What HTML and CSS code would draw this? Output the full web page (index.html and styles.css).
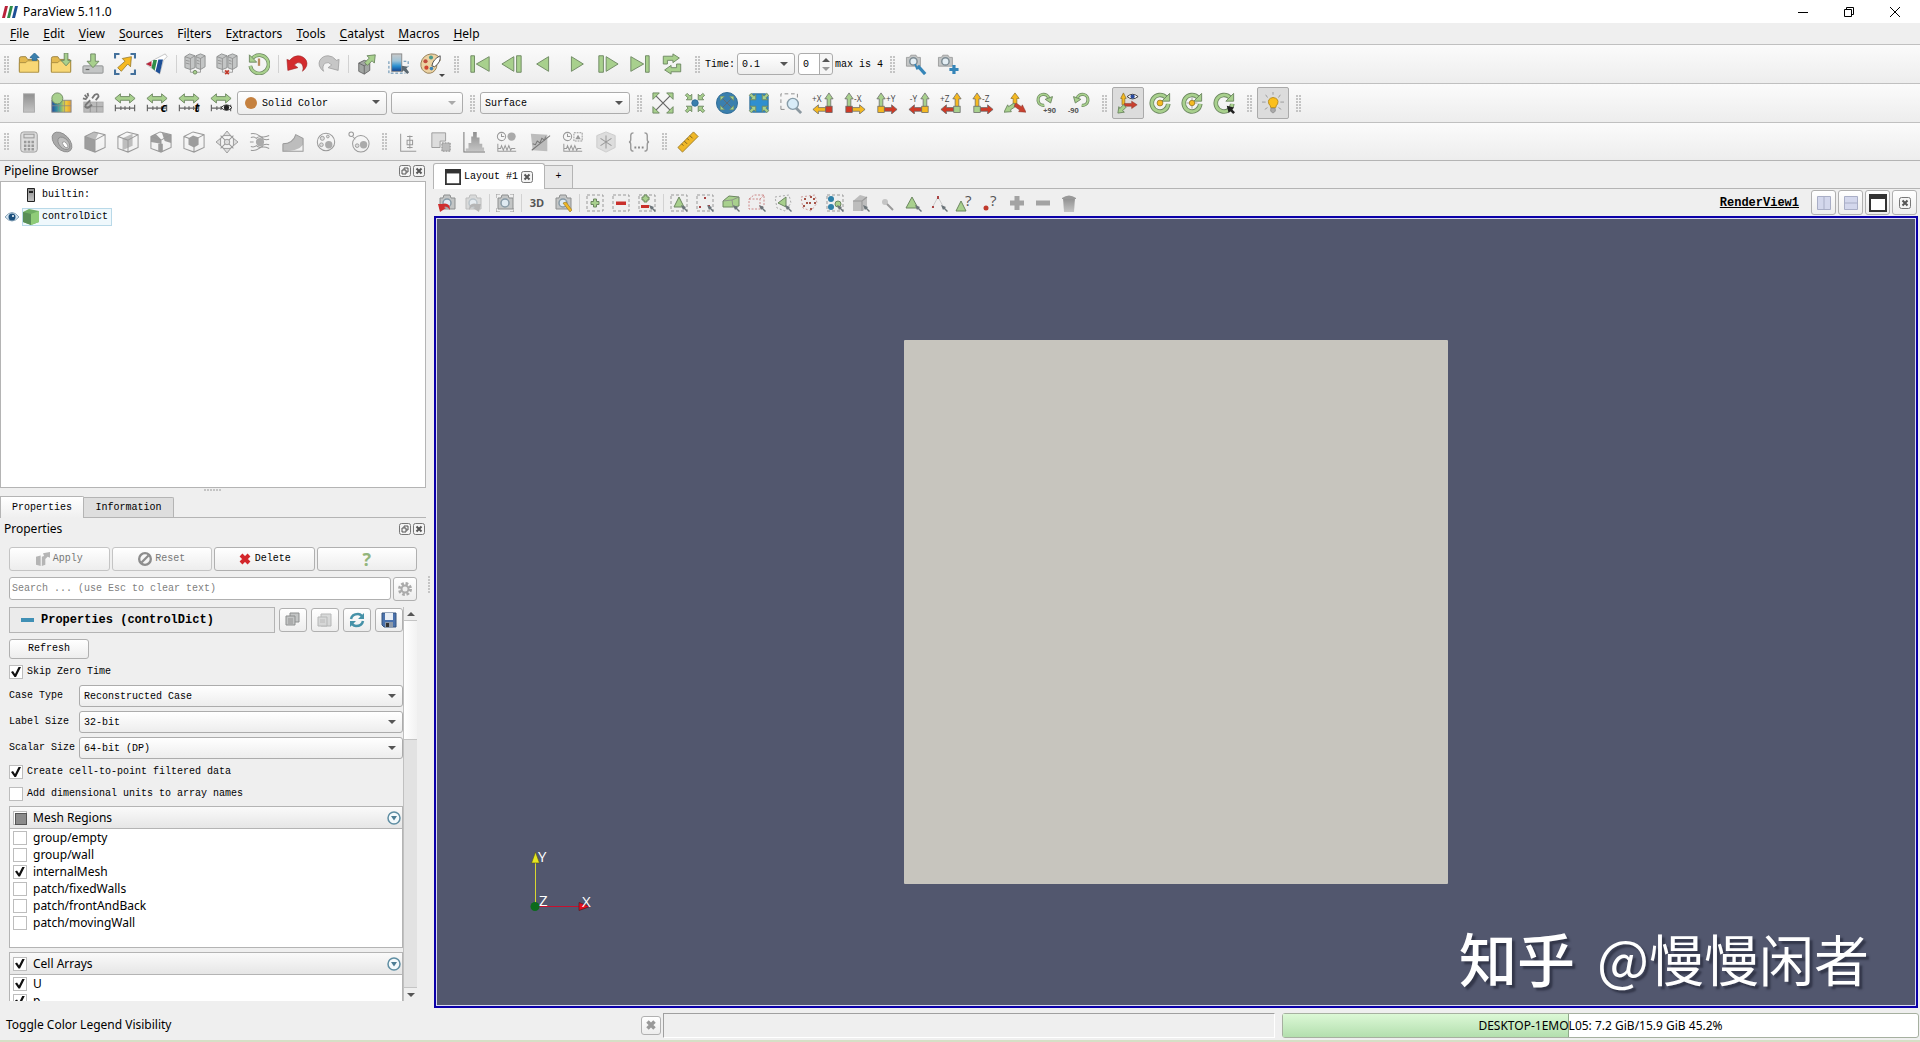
FILE: index.html
```
<!DOCTYPE html>
<html lang="en">
<head>
	<meta charset="UTF-8">
	<meta name="viewport" content="width=device-width, initial-scale=1.0">
	<title>ParaView 5.11.0</title>

	<link rel="stylesheet" href="styles.css">
</head>
<body>

	<!-- icon sprite -->
	<svg class="sprite" aria-hidden="true">
		<linearGradient id="rainbow"><stop offset="0" stop-color="#234a9c"/><stop offset=".35" stop-color="#3aa6a0"/><stop offset=".7" stop-color="#f3d23f"/><stop offset="1" stop-color="#e49a2f"/></linearGradient>
		<linearGradient id="deep" x2="0" y2="1"><stop offset="0" stop-color="#c9c9c9"/><stop offset=".4" stop-color="#9fc4d8"/><stop offset=".7" stop-color="#2a8fd0"/><stop offset="1" stop-color="#12408c"/></linearGradient>
		<linearGradient id="fade" x2="0" y2="1"><stop offset="0" stop-color="#8f8f8f"/><stop offset="1" stop-color="#c4c4c4"/></linearGradient>

		<!-- shared pieces -->
		<symbol id="folder" viewBox="0 0 24 24"><path class="folder" d="M1.500 20V6q0-2 2-2h5l2 3h10q2 0 2 2v11z"/><path class="folder-front" d="M1.500 21V10.500h7l2-2h12V21z"/></symbol>
		<symbol id="camera" viewBox="0 0 24 24"><path class="gray" d="M2 6h4l2-3h7l2 3h4v12H2z"/><circle cx="11.500" cy="11.500" r="5" fill="#e4eef4" stroke="#7e8c94" stroke-width="2"/></symbol>
		<symbol id="diag" viewBox="0 0 24 24"><path class="line" d="M4 4l16 16M20 4L4 20"/><path class="green" d="M1 1h7L1 8zM23 1v7l-7-7zM1 23v-7l7 7zM23 23h-7l7-7z"/></symbol>
		<symbol id="inward" viewBox="0 0 24 24"><path class="green" d="M8.500 2.500v6h-6l2-2-3-3 2-2 3 3zM15.500 2.500v6h6l-2-2 3-3-2-2-3 3zM8.500 21.500v-6h-6l2 2-3 3 2 2 3-3zM15.500 21.500v-6h6l-2 2 3 3-2 2-3-3z"/></symbol>
		<symbol id="range" viewBox="0 0 24 24"><path class="green" d="M1 7l6-5v3h10V2l6 5-6 5V9H7v3z"/><path class="line" d="M1 17.500h22M1.500 14v7M7.500 15.500v4M12 15.500v4M17 15.500v4M22.500 14v7"/></symbol>
		<symbol id="cube" viewBox="0 0 24 24"><path class="wire" d="M1 6l10-5 12 3v14l-11 5-11-4zM1 6l11 4v13M12 10l11-6"/></symbol>
		<symbol id="servers" viewBox="0 0 24 24"><path class="gray" d="M1 4l5-3 6 2v13l-5 2-6-2zM13 3l5-2 5 2v12l-5 3-5-2z"/><path class="line thin" d="M1 4l6 2v12M7 6l5-3M13 4l5 2v12M18 6l5-3M2 8l4 1M2 11l4 1M14 8l3 1M14 11l3 1M7 18v3h3M18 18v3h-4"/></symbol>
		<symbol id="clock" viewBox="0 0 24 24"><circle class="wire" cx="6" cy="6" r="4.500"/><path class="wire" d="M6 3v3h3"/><path class="wire" d="M2 14v8h20M2 19h3l1-3 2 5 2-5 2 5 2-5 2 5 1-2h4"/></symbol>
		<symbol id="turn" viewBox="0 0 24 24"><path d="M18.500 6A9 9 0 1 0 21 13" fill="none" stroke="#6c8760" stroke-width="5"/><path d="M18.500 6A9 9 0 1 0 21 13" fill="none" stroke="#a8d08d" stroke-width="3"/><path class="green" d="M22.500 1.500v8.500H14z"/></symbol>

		<!-- main controls -->
		<symbol id="open" viewBox="0 0 24 24"><use href="#folder"/><path class="blue" d="M18 0l5 5h-2.500v3h-5V5H13z"/></symbol>
		<symbol id="recent" viewBox="0 0 24 24"><use href="#folder"/><path class="green" d="M15.500 0h4v8h3.500l-5.500 6-5.500-6h3.500z"/></symbol>
		<symbol id="save" viewBox="0 0 24 24"><rect class="gray" x="1" y="14" width="22" height="8" rx="1"/><path class="line" d="M4 18h4"/><path class="green" d="M9.500 1h5v8h4L12 16 5.500 9h4z"/></symbol>
		<symbol id="extract" viewBox="0 0 24 24"><path d="M1 6V1h5M18 1h5v5M23 18v5h-5M6 23H1v-5" fill="none" stroke="#44719c" stroke-width="2.500"/><path class="yellow" d="M19 4l-1 11-3-3-7 8-4-4 8-7-3-3z"/></symbol>
		<symbol id="flask" viewBox="0 0 24 24"><path d="M17 3l4-2 2 3-4 4-4 15L0 12z" fill="#fff" stroke="#aaa" stroke-width=".7"/><path d="M0 12l6-3 0 6z" fill="#b8233a"/><path d="M8 7.500h4L9.500 19 6 16z" fill="#2e8d49"/><path d="M13.500 7h5L15 22.500 10.500 20z" fill="#1d4f96"/></symbol>
		<symbol id="connect" viewBox="0 0 24 24"><use href="#servers"/><circle class="green" cx="12" cy="21" r="2"/></symbol>
		<symbol id="disconnect" viewBox="0 0 24 24"><use href="#servers"/><path d="M10 19l4 4M14 19l-4 4" stroke="#c0392b" stroke-width="2"/></symbol>
		<symbol id="history" viewBox="0 0 24 24"><path d="M5 5.500A10 10 0 1 1 2.500 14" fill="none" stroke="#6c8760" stroke-width="4"/><path d="M5 5.500A10 10 0 1 1 2.500 14" fill="none" stroke="#a8d08d" stroke-width="2.500"/><path class="green" d="M1.500 2v8h8z"/><path d="M12 6v8" stroke="#b98c60" stroke-width="2.500"/></symbol>
		<symbol id="undo" viewBox="0 0 24 24"><path d="M1 7l1 12 11-3-4-3q4-4 7-2 4 3 2 9 7-6 4-12-3-5-9-5-5 0-9 5z" fill="#d32b2e" stroke="#9b2225" stroke-width=".6"/></symbol>
		<symbol id="redo" viewBox="0 0 24 24"><path d="M23 7l-1 12-11-3 4-3q-4-4-7-2-4 3-2 9-7-6-4-12 3-5 9-5 5 0 9 5z" fill="#c6c6c6" stroke="#999" stroke-width=".8"/></symbol>
		<symbol id="reload" viewBox="0 0 24 24"><path class="gray dark" d="M3 11l6-3 6 2v9l-6 4-6-3zM3 11l6 3v9M9 14l6-4"/><path class="green" d="M21 2l-1 9-2.500-2.500-5 5-3-3 5-5L12 3z"/></symbol>
		<symbol id="colorbar" viewBox="0 0 24 24"><rect x="4" y="1" width="11" height="19" fill="url(#deep)" stroke="#888"/><path d="M1 9v13h18M17 9h5v6" fill="none" stroke="#4a7fa5" stroke-dasharray="3 2"/><path d="M15 14l7 1-2 2 3 4-2 2-4-4-2 2z" fill="#5b6770"/></symbol>
		<symbol id="palette" viewBox="0 0 24 24"><path d="M12 1q9 0 10 7-5 4-4 8-3 7-10 6Q0 19 1 11 3 2 12 1z" fill="#ecd2a2" stroke="#8e7850"/><circle cx="6" cy="9" r="2.300" fill="#bf4d3d"/><circle cx="12" cy="5" r="2.200" fill="#4c9a8c"/><circle cx="7" cy="16" r="2.300" fill="#cf4431"/><circle cx="12.500" cy="17" r="2" fill="#3e86b8"/><path d="M22 3q-8 4-9 11l3 1q7-5 6-12z" fill="#fff" stroke="#444"/></symbol>

		<!-- playback -->
		<symbol id="first" viewBox="0 0 24 24"><path class="green" d="M2 3h4v18H2zM22 4v16L8 12z"/></symbol>
		<symbol id="previous" viewBox="0 0 24 24"><path class="green" d="M17 3h5v18h-5zM14 4v16L1 12z"/></symbol>
		<symbol id="reverse" viewBox="0 0 24 24"><path class="green" d="M17 4v16L4 12z"/></symbol>
		<symbol id="last" viewBox="0 0 24 24"><path class="green" d="M18 3h4v18h-4zM2 4v16l14-8z"/></symbol>
		<symbol id="loop" viewBox="0 0 24 24"><path class="green" d="M2.500 12V3.500H13V1l7 4.500-7 5V8H7v4zM21.500 12v8.500H11V23l-7-4.500 7-5V16h6v-4z"/></symbol>
		<symbol id="camera-edit" viewBox="0 0 24 24"><g transform="scale(.8)"><use href="#camera" width="24" height="24"/></g><path d="M14 14l8 9" stroke="#3585b8" stroke-width="3.500"/><path d="M11 12l2 5 4-1" fill="none" stroke="#3585b8" stroke-width="2"/></symbol>
		<symbol id="camera-add" viewBox="0 0 24 24"><g transform="scale(.8)"><use href="#camera" width="24" height="24"/></g><path d="M18.500 13v10M13.500 18h10" stroke="#3585b8" stroke-width="3.500"/></symbol>

		<!-- color map -->
		<symbol id="legend" viewBox="0 0 24 24"><rect x="6" y="2" width="12" height="20" fill="url(#fade)" stroke="#aaa"/></symbol>
		<symbol id="colormap" viewBox="0 0 24 24"><rect x="2" y="9" width="21" height="13" fill="url(#rainbow)" stroke="#888"/><path class="line thin" d="M2 15h21M9 9v13M16 9v13"/><circle class="green" cx="8" cy="7" r="6"/></symbol>
		<symbol id="unlink" viewBox="0 0 24 24"><rect x="2" y="11" width="21" height="11" fill="#bbb" stroke="#aaa"/><path class="line thin" d="M2 16h21M9 11v11M16 11v11"/><path d="M11 7l3-4q4-2 4 2l-3 4M9 9l-5 5q-1 4 3 3l4-3M3 3l3 4M1 7l4 1M6 1l1 4" fill="none" stroke="#777" stroke-width="2"/></symbol>
		<symbol id="range-eye" viewBox="0 0 24 24"><use href="#range"/><path d="M12 17q6-6 12 0-6 6-12 0z" fill="#eee" stroke="#222"/><circle cx="18" cy="17" r="2.800" fill="#222"/></symbol>

		<!-- camera controls -->
		<symbol id="zoom-all" viewBox="0 0 24 24"><use href="#inward"/><circle class="blue" cx="12" cy="12" r="3.500"/></symbol>
		<symbol id="globe" viewBox="0 0 24 24"><circle class="blue" cx="12" cy="12" r="11.500"/><g transform="translate(4 4) scale(.67)"><use href="#diag" width="24" height="24"/></g></symbol>
		<symbol id="zoom-box" viewBox="0 0 24 24"><rect class="blue bright" x="2" y="2" width="20" height="20" rx="3"/><use href="#inward"/></symbol>
		<symbol id="rubber" viewBox="0 0 24 24"><path d="M1 19V2h18v5M1 19h6" fill="none" stroke="#888" stroke-dasharray="4 3"/><path d="M17 17l6 6" stroke="#8b98a0" stroke-width="3"/><circle cx="14" cy="13" r="6" fill="#d8ecf8" stroke="#879ca8" stroke-width="1.500"/></symbol>
		<symbol id="axis-left" viewBox="0 0 24 24"><path class="u" d="M16.500 16V7.500H14L18.500 1 23 7.500h-2.500V16z"/><path class="s" d="M15 17H7v-3l-6 5 6 5v-3h8z"/><rect class="o" x="15" y="15.500" width="7" height="7"/></symbol>
		<symbol id="axis-right" viewBox="0 0 24 24"><path class="u" d="M3.500 16V7.500H1L5.500 1 10 7.500H7.500V16z"/><path class="s" d="M9 17h8v-3l6 5-6 5v-3H9z"/><rect class="o" x="2" y="15.500" width="7" height="7"/></symbol>
		<symbol id="iso" viewBox="0 0 24 24"><path class="yellow" d="M10 14V7H7.500L12 1l4.500 6H14v7z"/><path class="green" d="M11 12l-6 4-1-2-4 8 8-.5-1-2 6-4z"/><path class="red" d="M13 12l6 4 1-2 4 8-8-.5 1-2-6-4z"/></symbol>
		<symbol id="rot-plus" viewBox="0 0 24 24"><path d="M9 14.500A6 6 0 1 1 14 7" fill="none" stroke="#6c8760" stroke-width="3.500"/><path d="M9 14.500A6 6 0 1 1 14 7" fill="none" stroke="#a8d08d" stroke-width="2"/><path class="green" d="M18 5l-2 7-6-4z"/></symbol>
		<symbol id="rot-minus" viewBox="0 0 24 24"><path d="M15 14.500A6 6 0 1 0 10 7" fill="none" stroke="#6c8760" stroke-width="3.500"/><path d="M15 14.500A6 6 0 1 0 10 7" fill="none" stroke="#a8d08d" stroke-width="2"/><path class="green" d="M6 5l2 7 6-4z"/></symbol>
		<symbol id="axes-show" viewBox="0 0 24 24"><path class="yellow" d="M5.500 14V7H4l3-6 3 6H8.500v7z"/><path class="red" d="M8 12.500h8V10l6 4-6 4v-2.500H8z"/><path class="green" d="M7 14l-4 4-1-2-1 7 7-1-2-1.500 4-4z"/><path d="M11 5q6-5 12 0-6 5-12 0z" fill="#fff" stroke="#333"/><circle cx="17" cy="5" r="2.300" fill="#2b4c9e"/></symbol>
		<symbol id="center-show" viewBox="0 0 24 24"><use href="#turn"/><circle class="yellow" cx="12" cy="12" r="3.200"/></symbol>
		<symbol id="center-reset" viewBox="0 0 24 24"><use href="#turn"/><path class="line thin" d="M12 6v12M6 12h12"/><circle class="yellow" cx="12" cy="12" r="3"/></symbol>
		<symbol id="center-pick" viewBox="0 0 24 24"><use href="#turn"/><path d="M15 15l8 2-2 2 3 3-2 2-3-3-2 2z" fill="#222"/></symbol>
		<symbol id="bulb" viewBox="0 0 24 24"><path class="line thin" d="M12 0v3M4 3l2 3M20 3l-2 3M0 11h4M20 11h4M3 19l3-2M21 19l-3-2"/><path d="M9.500 17q0-2-2-4-2-6 4.500-7 7 1 5 7-2 2-2 4z" fill="#fbbf1b" stroke="#b58a1b"/><path d="M9.500 18h5v3l-2.500 2-2.500-2z" fill="#aaa" stroke="#777" stroke-width=".6"/></symbol>

		<!-- common filters -->
		<symbol id="calculator" viewBox="0 0 24 24"><rect class="pale" x="3" y="1" width="18" height="22" rx="3"/><rect class="wire" x="6.500" y="3.500" width="11" height="4"/><path d="M6.500 12h11M6.500 16h11M6.500 20h11" stroke="#999" stroke-width="2.700" stroke-dasharray="2.700 1.400"/></symbol>
		<symbol id="contour" viewBox="0 0 24 24"><ellipse cx="12" cy="12" rx="13" ry="8" transform="rotate(45 12 12)" fill="#a9a9a9" stroke="#8d8d8d"/><ellipse cx="14" cy="13.500" rx="8" ry="5" transform="rotate(48 14 13.500)" fill="#c0c0c0" stroke="#8d8d8d"/><ellipse cx="15.500" cy="15" rx="4" ry="2" transform="rotate(50 15.500 15)" fill="#fff" stroke="#999"/></symbol>
		<symbol id="clip" viewBox="0 0 24 24"><path class="solid" d="M1 6l11 4v13L1 19z"/><path class="solid light" d="M1 6l10-5 5 1-4 8z"/><use href="#cube"/></symbol>
		<symbol id="slice" viewBox="0 0 24 24"><path class="solid light" d="M6 8l11-5v13L6 21z"/><use href="#cube"/></symbol>
		<symbol id="threshold" viewBox="0 0 24 24"><path class="solid" d="M1 6l5-3 6 6v5L1 12zM13 2l10 2v9l-7-2zM9 14h5v8H9z"/><use href="#cube"/></symbol>
		<symbol id="subset" viewBox="0 0 24 24"><use href="#cube"/><path class="solid" d="M6 8l5-3 6 2v8l-5 3-6-3z"/></symbol>
		<symbol id="glyph" viewBox="0 0 24 24"><circle class="wire" cx="12" cy="12" r="8"/><path class="wire" d="M5 5l14 14M19 5L5 19"/><path class="pale" d="M12 0l4 5H8zM12 24l4-5H8zM0 12l5-4v8zM24 12l-5-4v8z"/><circle class="pale" cx="12" cy="12" r="3"/></symbol>
		<symbol id="stream" viewBox="0 0 24 24"><circle cx="12" cy="12" r="4.500" fill="#aaa"/><path class="wire" d="M2 3q5-1 9 2t11 0M2 7q4-1 6 1 4-4 8 1 3 1 6 0M2 17q4 1 6-1 4 4 8-1 3-1 6 0M2 21q5 1 9-2t11 0M1 12h4"/></symbol>
		<symbol id="warp" viewBox="0 0 24 24"><path class="solid light" d="M1 14q11 0 14-10l8 4v7q-5 7-22 7z"/><path class="wire" d="M1 14v8h22V8M1 14q11 0 14-10l8 4"/></symbol>
		<symbol id="group" viewBox="0 0 24 24"><circle class="wire" cx="12" cy="12" r="9.500"/><circle cx="15" cy="15" r="4" fill="#aaa"/><circle class="pale" cx="8" cy="8" r="2.200"/><circle class="pale" cx="7" cy="15" r="2"/><circle class="pale" cx="14" cy="6" r="1.500"/></symbol>
		<symbol id="level" viewBox="0 0 24 24"><circle class="wire" cx="14" cy="14" r="9"/><circle class="wire" cx="3.500" cy="3.500" r="2.500"/><path class="wire" d="M5 6l3 3"/><circle cx="17" cy="15" r="4" fill="#aaa"/><circle class="pale" cx="10" cy="16" r="2"/></symbol>
		<symbol id="plot-box" viewBox="0 0 24 24"><path class="wire" d="M4 3v19h17M14 5v14M11 6h6M11 18h6M11 10h6v5h-6z"/></symbol>
		<symbol id="extract-sel" viewBox="0 0 24 24"><path class="pale" d="M2 2h15v9h-6v7H2z"/><path d="M13 13h9v9h-9z" fill="#bbb" stroke="#888" stroke-dasharray="2 1"/></symbol>
		<symbol id="histogram" viewBox="0 0 24 24"><path d="M3 22v-3h3v-6h3V6h2V1h4v6h3v7h3v4h2v4z" fill="url(#fade)"/><path class="wire dark" d="M1 1v22h23"/></symbol>
		<symbol id="plot-time" viewBox="0 0 24 24"><use href="#clock"/><circle cx="17" cy="6" r="4.500" fill="#aaa"/></symbol>
		<symbol id="plot-line" viewBox="0 0 24 24"><path class="solid light" d="M2 3l18 1v18l-16-1z"/><path class="wire dark" d="M3 21L23 5M4 14l3 1 2-4 3 2 2-5 3 2 1-4"/></symbol>
		<symbol id="plot-sel" viewBox="0 0 24 24"><use href="#clock"/><path class="wire" d="M13 2h9v9h-9z" stroke-dasharray="2 1"/><path d="M17.500 4l3 5h-6z" fill="#999"/></symbol>
		<symbol id="snow" viewBox="0 0 24 24"><path d="M12 1l10 4v13l-10 5-10-5V5z" fill="#ddd" stroke="#ccc"/><path class="wire" d="M12 5v14M6 8l12 8M18 8L6 16"/></symbol>
		<symbol id="braces" viewBox="0 0 24 24"><path d="M6 2Q3 2 3 5v4q0 3-2 3 2 0 2 3v4q0 3 3 3M18 2q3 0 3 3v4q0 3 2 3-2 0-2 3v4q0 3-3 3" fill="none" stroke="#999" stroke-width="1.500"/><path d="M7 18h10" stroke="#888" stroke-width="2" stroke-dasharray="2"/></symbol>
		<symbol id="ruler" viewBox="0 0 24 24"><path d="M1 18L18 1l5 5L6 23z" fill="#f0b726" stroke="#9c7b23"/><path d="M5 14l2 2M8 11l3 3M11 8l2 2M14 5l3 3" stroke="#6f5b20"/></symbol>

		<!-- view toolbar, 18px grid -->
		<symbol id="s-box" viewBox="0 0 18 18"><path d="M1 1h16v16H1z" fill="none" stroke="#999" stroke-dasharray="3 2"/></symbol>
		<symbol id="s-hand" viewBox="0 0 18 18"><path d="M11 11l5 2-1 1 3 3-1 1-3-3-1 1z" fill="#6b7479"/></symbol>
		<symbol id="s-camera" viewBox="0 0 18 18"><path class="gray" d="M2 4h3l1-3h6l1 3h4v11H2z"/><circle cx="9" cy="9" r="4" fill="#dfeaf2" stroke="#889aa6" stroke-width="1.500"/></symbol>
		<symbol id="s-undo" viewBox="0 0 18 18"><use href="#s-camera"/><path d="M0 10l2 8 6-4-2-1q3-2 6 3 0-8-8-6z" fill="#cf2e2e"/></symbol>
		<symbol id="s-redo" viewBox="0 0 18 18"><use href="#s-camera" opacity=".5"/><path d="M17 10l-2 8-6-4 2-1q-3-2-6 3 0-8 8-6z" fill="#b5b5b5"/></symbol>
		<symbol id="s-shot" viewBox="0 0 18 18"><use href="#s-camera"/><path class="wire" d="M0 4V0h4M14 0h4v4M18 14v4h-4M4 18H0v-4"/></symbol>
		<symbol id="s-pencil" viewBox="0 0 18 18"><use href="#s-camera"/><path d="M9 9l3-1 6 8-2 2z" fill="#f0b726" stroke="#8d7024" stroke-width=".6"/></symbol>
		<symbol id="s-add" viewBox="0 0 18 18"><use href="#s-box"/><path class="green" d="M7.500 5h3v2.500H13v3h-2.500V13h-3v-2.500H5v-3h2.500z"/></symbol>
		<symbol id="s-sub" viewBox="0 0 18 18"><use href="#s-box"/><path d="M4 7.500h10v3.500H4z" fill="#c9302c"/></symbol>
		<symbol id="s-toggle" viewBox="0 0 18 18"><use href="#s-box"/><path class="green" d="M6 1h3v2h2v3H9v2H6V6H4V3h2z"/><path d="M3 11h8v3H3z" fill="#c9302c"/><use href="#s-hand"/></symbol>
		<symbol id="s-cells" viewBox="0 0 18 18"><use href="#s-box"/><path class="green" d="M9 3l5 10H4z"/><use href="#s-hand"/></symbol>
		<symbol id="s-points" viewBox="0 0 18 18"><use href="#s-box"/><path d="M8 3h2v2H8zM3 12h2v2H3zM12 11h2v2h-2z" fill="#a44"/><use href="#s-hand"/></symbol>
		<symbol id="s-frustum" viewBox="0 0 18 18"><path class="green" d="M1 7l6-5 10 1v9l-6 1H1z"/><path class="line thin" d="M1 7l9-1 7-3M10 6l1 7"/><use href="#s-hand"/></symbol>
		<symbol id="s-fpoints" viewBox="0 0 18 18"><path d="M1 5l5-4h10v10l-4 4H1zM1 5h11v10M12 5l4-4" fill="none" stroke="#c88" stroke-dasharray="2 1.500"/><use href="#s-hand"/></symbol>
		<symbol id="s-poly" viewBox="0 0 18 18"><path d="M1 3l14-2 2 8-6 8-8-3z" fill="none" stroke="#aaa" stroke-dasharray="2 2"/><path class="green" d="M12 3v10L4 9z"/><use href="#s-hand"/></symbol>
		<symbol id="s-polyp" viewBox="0 0 18 18"><path d="M1 3l14-2 2 8-6 8-8-3z" fill="none" stroke="#c99" stroke-dasharray="2 2"/><path d="M4 4h2v2H4zM10 2h2v2h-2zM3 11h2v2H3zM9 8h2v2H9zM14 8h2v2h-2zM10 14h2v2h-2zM13 4h2v2h-2zM6 8h2v2H6z" fill="#a65448"/></symbol>
		<symbol id="s-block" viewBox="0 0 18 18"><use href="#s-box"/><circle cx="5" cy="5" r="3" fill="#2f81a8"/><circle cx="5" cy="13" r="3" fill="#2f81a8"/><circle class="green" cx="12" cy="10" r="3"/><use href="#s-hand"/></symbol>
		<symbol id="s-blocks" viewBox="0 0 18 18"><path class="solid light" d="M1 7l7-6 7 2v9l-4 5H1z"/><path class="wire" d="M1 7h9l5-4M10 7v10"/><use href="#s-hand"/></symbol>
		<symbol id="s-dot" viewBox="0 0 18 18"><circle cx="7" cy="8" r="3" fill="#c4c4c4"/><path d="M9 10l6 6" stroke="#999" stroke-width="2"/></symbol>
		<symbol id="s-cell" viewBox="0 0 18 18"><path class="green" d="M8 3l6 11H2z"/><use href="#s-hand"/></symbol>
		<symbol id="s-point" viewBox="0 0 18 18"><path d="M8 3l6 11M8 3L2 14" stroke="#ccc"/><path d="M7 2h2v3H7zM2 12h2v2H2z" fill="#a44"/><use href="#s-hand"/></symbol>
		<symbol id="s-plus" viewBox="0 0 18 18"><path d="M9 2v14M2 9h14" stroke="#a3a3a3" stroke-width="5"/></symbol>
		<symbol id="s-minus" viewBox="0 0 18 18"><path d="M2 9h14" stroke="#a3a3a3" stroke-width="5"/></symbol>
		<symbol id="s-trash" viewBox="0 0 18 18"><path d="M3 4h12l-1 14H4z" fill="url(#fade)"/><path d="M2 4q7-5 14 0v1H2z" fill="#999"/></symbol>

		<!-- dock and panel -->
		<symbol id="float" viewBox="0 0 12 12"><rect class="frame" x=".5" y=".5" width="11" height="11" rx="2"/><path d="M5 5V3h4v4H7M3 5h4v4H3z" fill="none" stroke="#555"/></symbol>
		<symbol id="close" viewBox="0 0 12 12"><rect class="frame" x=".5" y=".5" width="11" height="11" rx="2"/><path d="M3.500 3.500l5 5M8.500 3.500l-5 5" stroke="#555" stroke-width="2"/></symbol>
		<symbol id="pane" viewBox="0 0 18 18"><path d="M1 1h16v16H1z" fill="#fff" stroke="#333" stroke-width="2"/><path d="M0 0h18v5H0z" fill="#333"/></symbol>
		<symbol id="drop" viewBox="0 0 14 14"><circle cx="7" cy="7" r="6" fill="#f4fafc" stroke="#5f8ea3" stroke-width="1.500"/><path d="M4 5h6L7 9.500z" fill="#4d7d94"/></symbol>
	</svg>

	<header class="titlebar">
		<svg class="logo" viewBox="0 0 16 12"><path d="M3 0h3L3 12H0z" fill="#b8233a"/><path d="M8 0h3L8 12H5z" fill="#2e8d49"/><path d="M13 0h3l-3 12h-3z" fill="#1d4f96"/></svg>
		<span class="title">ParaView 5.11.0</span>
		<button class="win" aria-label="Minimize"><svg viewBox="0 0 12 12"><path d="M1 6.500h10"/></svg></button>
		<button class="win" aria-label="Restore"><svg viewBox="0 0 12 12"><path d="M1.500 3.500h7v7h-7zM3.500 3.500v-2h7v7h-2"/></svg></button>
		<button class="win" aria-label="Close"><svg viewBox="0 0 12 12"><path d="M1 1l10 10M11 1L1 11"/></svg></button>
	</header>

	<nav class="menubar">
		<a href="#"><u>F</u>ile</a>
		<a href="#"><u>E</u>dit</a>
		<a href="#"><u>V</u>iew</a>
		<a href="#"><u>S</u>ources</a>
		<a href="#">Fi<u>l</u>ters</a>
		<a href="#">E<u>x</u>tractors</a>
		<a href="#"><u>T</u>ools</a>
		<a href="#"><u>C</u>atalyst</a>
		<a href="#"><u>M</u>acros</a>
		<a href="#"><u>H</u>elp</a>
	</nav>

	<div class="toolbar">
		<i class="grip"></i>
		<button class="tool" aria-label="Open"><svg><use href="#open"/></svg></button>
		<button class="tool" aria-label="Recent"><svg><use href="#recent"/></svg></button>
		<button class="tool" aria-label="Save data"><svg><use href="#save"/></svg></button>
		<button class="tool" aria-label="Save extracts"><svg><use href="#extract"/></svg></button>
		<button class="tool" aria-label="Save state"><svg><use href="#flask"/></svg></button>
		<i class="sep"></i>
		<button class="tool" aria-label="Connect"><svg><use href="#connect"/></svg></button>
		<button class="tool" aria-label="Disconnect"><svg><use href="#disconnect"/></svg></button>
		<button class="tool" aria-label="Reset session"><svg><use href="#history"/></svg></button>
		<i class="sep"></i>
		<button class="tool" aria-label="Undo"><svg><use href="#undo"/></svg></button>
		<button class="tool" aria-label="Redo"><svg><use href="#redo"/></svg></button>
		<i class="sep"></i>
		<button class="tool" aria-label="Auto apply"><svg><use href="#reload"/></svg></button>
		<button class="tool" aria-label="Find data"><svg><use href="#colorbar"/></svg></button>
		<button class="tool has-menu" aria-label="Color palette"><svg><use href="#palette"/></svg></button>
		<i class="grip"></i>
		<button class="tool" aria-label="First frame"><svg><use href="#first"/></svg></button>
		<button class="tool" aria-label="Previous frame"><svg><use href="#previous"/></svg></button>
		<button class="tool" aria-label="Reverse"><svg><use href="#reverse"/></svg></button>
		<button class="tool flip" aria-label="Play"><svg><use href="#reverse"/></svg></button>
		<button class="tool flip" aria-label="Next frame"><svg><use href="#previous"/></svg></button>
		<button class="tool" aria-label="Last frame"><svg><use href="#last"/></svg></button>
		<button class="tool" aria-label="Loop"><svg><use href="#loop"/></svg></button>
		<i class="grip"></i>
		<label for="time">Time:</label>
		<span class="combo combo-time"><select id="time"><option>0.1</option></select></span>
		<span class="spin"><input id="step" type="number" value="0" aria-label="Time step"></span>
		<label for="step">max is 4</label>
		<i class="grip"></i>
		<button class="tool" aria-label="Adjust camera"><svg><use href="#camera-edit"/></svg></button>
		<button class="tool" aria-label="Add camera"><svg><use href="#camera-add"/></svg></button>
	</div>

	<div class="toolbar">
		<i class="grip"></i>
		<button class="tool" aria-label="Legend"><svg><use href="#legend"/></svg></button>
		<button class="tool" aria-label="Edit color map"><svg><use href="#colormap"/></svg></button>
		<button class="tool" aria-label="Separate color map"><svg><use href="#unlink"/></svg></button>
		<button class="tool" aria-label="Rescale to data"><svg><use href="#range"/></svg></button>
		<button class="tool" aria-label="Rescale to custom"><svg viewBox="0 0 24 24"><use href="#range"/><text x="16" y="22" class="mark">c</text></svg></button>
		<button class="tool" aria-label="Rescale over time"><svg viewBox="0 0 24 24"><use href="#range"/><text x="18" y="22" class="mark">t</text></svg></button>
		<button class="tool" aria-label="Rescale to visible"><svg><use href="#range-eye"/></svg></button>
		<span class="combo combo-color"><select aria-label="Coloring"><option>Solid Color</option></select></span>
		<span class="combo combo-part"><select aria-label="Component" disabled></select></span>
		<i class="grip"></i>
		<span class="combo combo-rep"><select aria-label="Representation"><option>Surface</option></select></span>
		<i class="grip"></i>
		<button class="tool" aria-label="Reset camera"><svg><use href="#diag"/></svg></button>
		<button class="tool" aria-label="Zoom to data"><svg><use href="#zoom-all"/></svg></button>
		<button class="tool" aria-label="Reset camera closest"><svg><use href="#globe"/></svg></button>
		<button class="tool" aria-label="Zoom closest"><svg><use href="#zoom-box"/></svg></button>
		<button class="tool" aria-label="Zoom to box"><svg><use href="#rubber"/></svg></button>
		<button class="tool ax-x" aria-label="+X"><svg viewBox="0 0 24 24"><use href="#axis-left"/><text x="0" y="11">+X</text></svg></button>
		<button class="tool ax-x" aria-label="-X"><svg viewBox="0 0 24 24"><use href="#axis-right"/><text x="11" y="11">-X</text></svg></button>
		<button class="tool ax-y" aria-label="+Y"><svg viewBox="0 0 24 24"><use href="#axis-right"/><text x="11" y="11">+Y</text></svg></button>
		<button class="tool ax-y" aria-label="-Y"><svg viewBox="0 0 24 24"><use href="#axis-left"/><text x="2" y="11">-Y</text></svg></button>
		<button class="tool ax-z" aria-label="+Z"><svg viewBox="0 0 24 24"><use href="#axis-left"/><text x="0" y="11">+Z</text></svg></button>
		<button class="tool ax-z" aria-label="-Z"><svg viewBox="0 0 24 24"><use href="#axis-right"/><text x="11" y="11">-Z</text></svg></button>
		<button class="tool" aria-label="Isometric"><svg><use href="#iso"/></svg></button>
		<button class="tool" aria-label="Rotate +90"><svg viewBox="0 0 24 24"><use href="#rot-plus"/><text x="8" y="23" class="deg">+90</text></svg></button>
		<button class="tool" aria-label="Rotate -90"><svg viewBox="0 0 24 24"><use href="#rot-minus"/><text x="0" y="23" class="deg">-90</text></svg></button>
		<i class="grip"></i>
		<button class="tool pressed" aria-label="Show orientation axes"><svg><use href="#axes-show"/></svg></button>
		<button class="tool" aria-label="Show center"><svg><use href="#center-show"/></svg></button>
		<button class="tool" aria-label="Reset center"><svg><use href="#center-reset"/></svg></button>
		<button class="tool" aria-label="Pick center"><svg><use href="#center-pick"/></svg></button>
		<i class="grip"></i>
		<button class="tool pressed" aria-label="Light kit"><svg><use href="#bulb"/></svg></button>
		<i class="grip"></i>
	</div>

	<div class="toolbar filters">
		<i class="grip"></i>
		<button class="tool" aria-label="Calculator"><svg><use href="#calculator"/></svg></button>
		<button class="tool" aria-label="Contour"><svg><use href="#contour"/></svg></button>
		<button class="tool" aria-label="Clip"><svg><use href="#clip"/></svg></button>
		<button class="tool" aria-label="Slice"><svg><use href="#slice"/></svg></button>
		<button class="tool" aria-label="Threshold"><svg><use href="#threshold"/></svg></button>
		<button class="tool" aria-label="Extract subset"><svg><use href="#subset"/></svg></button>
		<button class="tool" aria-label="Glyph"><svg><use href="#glyph"/></svg></button>
		<button class="tool" aria-label="Stream tracer"><svg><use href="#stream"/></svg></button>
		<button class="tool" aria-label="Warp by vector"><svg><use href="#warp"/></svg></button>
		<button class="tool" aria-label="Group datasets"><svg><use href="#group"/></svg></button>
		<button class="tool" aria-label="Extract level"><svg><use href="#level"/></svg></button>
		<i class="grip"></i>
		<button class="tool" aria-label="Quartiles"><svg><use href="#plot-box"/></svg></button>
		<button class="tool" aria-label="Extract selection"><svg><use href="#extract-sel"/></svg></button>
		<button class="tool" aria-label="Histogram"><svg><use href="#histogram"/></svg></button>
		<button class="tool" aria-label="Plot over time"><svg><use href="#plot-time"/></svg></button>
		<button class="tool" aria-label="Plot over line"><svg><use href="#plot-line"/></svg></button>
		<button class="tool" aria-label="Plot selection"><svg><use href="#plot-sel"/></svg></button>
		<button class="tool" aria-label="Probe"><svg><use href="#snow"/></svg></button>
		<button class="tool" aria-label="Programmable filter"><svg><use href="#braces"/></svg></button>
		<i class="grip"></i>
		<button class="tool" aria-label="Ruler"><svg><use href="#ruler"/></svg></button>
	</div>

	<main>
		<aside>
			<section class="dock pipeline">
				<div class="dock-title">
					<h2>Pipeline Browser</h2>
					<button class="mini" aria-label="Float"><svg><use href="#float"/></svg></button>
					<button class="mini" aria-label="Close"><svg><use href="#close"/></svg></button>
				</div>
				<ul class="tree">
					<li>
						<span class="eye"></span>
						<a href="#"><svg class="node" viewBox="0 0 16 16"><path d="M4.500 1.500h7v13h-7z" fill="url(#fade)" stroke="#222"/><path d="M6 4h4v2H6z" fill="#222"/></svg>builtin:</a>
					</li>
					<li>
						<svg class="eye" viewBox="0 0 14 10"><path d="M0 5q7-9 14 0-7 8-14 0z" fill="#d5e6f2" stroke="#8ba5b8"/><circle cx="7" cy="5" r="3.500" fill="#1c4f7c"/><circle cx="8" cy="4" r="1" fill="#fff"/></svg>
						<a href="#" class="current"><svg class="node" viewBox="0 0 16 16"><path d="M0 3l6-3 10 2v11l-8 3-8-3z" fill="#6fae63"/><path d="M8 5l8-3v11l-8 3z" fill="#8fcc78"/><path d="M0 3l8 2v11l-8-3z" fill="#5a8f57"/></svg>controlDict</a>
					</li>
				</ul>
			</section>
			<i class="splitter"></i>
			<section class="dock properties">
				<div class="tabs">
					<button class="tab on">Properties</button>
					<button class="tab">Information</button>
				</div>
				<div class="dock-title">
					<h2>Properties</h2>
					<button class="mini" aria-label="Float"><svg><use href="#float"/></svg></button>
					<button class="mini" aria-label="Close"><svg><use href="#close"/></svg></button>
				</div>
				<div class="actions">
					<button class="btn" disabled><svg viewBox="0 0 12 12"><path d="M0 4l4-1v9l-4-1zM5 4l3-1v8l-3 1zM6 1l6-1v5l-2-1-2 2z" fill="#b5b5b5"/></svg>Apply</button>
					<button class="btn" disabled><svg viewBox="0 0 12 12"><circle cx="6" cy="6" r="5" fill="none" stroke="#8d8d8d" stroke-width="2"/><path d="M9 3L3 9" stroke="#8d8d8d" stroke-width="2"/></svg>Reset</button>
					<button class="btn"><svg viewBox="0 0 14 14"><path d="M3 3l8 8M11 3l-8 8" stroke="#d3262b" stroke-width="4"/></svg>Delete</button>
					<button class="btn help">?</button>
				</div>
				<div class="search">
					<input type="text" placeholder="Search ... (use Esc to clear text)" aria-label="Search">
					<button class="btn" aria-label="Advanced"><svg viewBox="0 0 14 14"><circle cx="7" cy="7" r="5.500" fill="none" stroke="#aaa" stroke-width="3" stroke-dasharray="2.600 1.700"/><circle cx="7" cy="7" r="3.500" fill="#eee" stroke="#aaa" stroke-width="2"/></svg></button>
				</div>
				<div class="scroll">
					<form class="panel">
						<div class="group">
							<h3><i></i>Properties (controlDict)</h3>
							<button type="button" class="btn" aria-label="Copy"><svg viewBox="0 0 16 16"><path class="gray" d="M5 1h9v9H5z"/><path class="gray" d="M1 4h9v9H1z"/><path class="line thin" d="M3 7h5M3 9h5M3 11h5"/></svg></button>
							<button type="button" class="btn faint" aria-label="Paste"><svg viewBox="0 0 16 16"><path class="gray" d="M4 2h10v12H4z"/><path class="gray" d="M1 5h9v9H1z"/><path class="line thin" d="M3 8h5M3 10h5"/></svg></button>
							<button type="button" class="btn" aria-label="Restore defaults"><svg viewBox="0 0 16 16"><path d="M2 7q1-5 7-5 2 0 4 2M14 9q-1 5-7 5-2 0-4-2" fill="none" stroke="#4692a8" stroke-width="2.500"/><path d="M15 1v6H9zM1 15V9h6z" fill="#4692a8"/></svg></button>
							<button type="button" class="btn" aria-label="Save defaults"><svg viewBox="0 0 16 16"><path d="M1 1h14v14H3l-2-2z" fill="#4a72ad" stroke="#35547f"/><path d="M4 1h8v7H4z" fill="#e8eef5"/><path d="M4 10h8v5H4z" fill="#8d99a8"/><path d="M5 11h3v4H5z" fill="#333"/></svg></button>
						</div>
						<button type="button" class="btn refresh">Refresh</button>
						<label class="check"><input type="checkbox" checked>Skip Zero Time</label>
						<div class="field"><label for="case">Case Type</label><span class="combo"><select id="case"><option>Reconstructed Case</option></select></span></div>
						<div class="field"><label for="lsize">Label Size</label><span class="combo"><select id="lsize"><option>32-bit</option></select></span></div>
						<div class="field"><label for="ssize">Scalar Size</label><span class="combo"><select id="ssize"><option>64-bit (DP)</option></select></span></div>
						<label class="check"><input type="checkbox" checked>Create cell-to-point filtered data</label>
						<label class="check"><input type="checkbox">Add dimensional units to array names</label>
						<fieldset class="list mesh">
							<div class="list-head"><label><input type="checkbox" class="partial">Mesh Regions</label><svg><use href="#drop"/></svg></div>
							<label><input type="checkbox">group/empty</label>
							<label><input type="checkbox">group/wall</label>
							<label><input type="checkbox" checked>internalMesh</label>
							<label><input type="checkbox">patch/fixedWalls</label>
							<label><input type="checkbox">patch/frontAndBack</label>
							<label><input type="checkbox">patch/movingWall</label>
						</fieldset>
						<fieldset class="list">
							<div class="list-head"><label><input type="checkbox" checked>Cell Arrays</label><svg><use href="#drop"/></svg></div>
							<label><input type="checkbox" checked>U</label>
							<label><input type="checkbox" checked>p</label>
						</fieldset>
					</form>
					<div class="scrollbar"><i class="arrow up"></i><i class="thumb"></i><i class="track"></i><i class="arrow"></i></div>
				</div>
			</section>
		</aside>

		<i class="divider"></i>

		<section class="layout">
			<div class="layout-tabs">
				<button class="tab on"><svg class="pane-icon"><use href="#pane"/></svg>Layout #1<svg class="x"><use href="#close"/></svg></button>
				<button class="tab">+</button>
			</div>
			<div class="viewbar">
				<button class="vt" aria-label="Camera undo"><svg><use href="#s-undo"/></svg></button>
				<button class="vt" aria-label="Camera redo"><svg><use href="#s-redo"/></svg></button>
				<i class="sep"></i>
				<button class="vt" aria-label="Capture"><svg><use href="#s-shot"/></svg></button>
				<i class="sep"></i>
				<button class="vt three">3D</button>
				<button class="vt" aria-label="Adjust camera"><svg><use href="#s-pencil"/></svg></button>
				<i class="sep"></i>
				<button class="vt" aria-label="Add selection"><svg><use href="#s-add"/></svg></button>
				<button class="vt" aria-label="Subtract selection"><svg><use href="#s-sub"/></svg></button>
				<button class="vt" aria-label="Toggle selection"><svg><use href="#s-toggle"/></svg></button>
				<i class="sep"></i>
				<button class="vt" aria-label="Select cells on"><svg><use href="#s-cells"/></svg></button>
				<button class="vt" aria-label="Select points on"><svg><use href="#s-points"/></svg></button>
				<button class="vt" aria-label="Select cells through"><svg><use href="#s-frustum"/></svg></button>
				<button class="vt" aria-label="Select points through"><svg><use href="#s-fpoints"/></svg></button>
				<button class="vt" aria-label="Polygon cells"><svg><use href="#s-poly"/></svg></button>
				<button class="vt" aria-label="Polygon points"><svg><use href="#s-polyp"/></svg></button>
				<button class="vt" aria-label="Select block"><svg><use href="#s-block"/></svg></button>
				<button class="vt" aria-label="Select blocks through"><svg><use href="#s-blocks"/></svg></button>
				<button class="vt" aria-label="Interactive block"><svg><use href="#s-dot"/></svg></button>
				<button class="vt" aria-label="Interactive cells"><svg><use href="#s-cell"/></svg></button>
				<button class="vt" aria-label="Interactive points"><svg><use href="#s-point"/></svg></button>
				<button class="vt" aria-label="Hover cells"><svg viewBox="0 0 18 18"><path class="green" d="M5 7l5 10H0z"/><text x="9" y="12" class="ask">?</text></svg></button>
				<button class="vt" aria-label="Hover points"><svg viewBox="0 0 18 18"><circle cx="4" cy="14" r="2.500" fill="#c0392b"/><text x="8" y="12" class="ask">?</text></svg></button>
				<button class="vt" aria-label="Grow"><svg><use href="#s-plus"/></svg></button>
				<button class="vt" aria-label="Shrink"><svg><use href="#s-minus"/></svg></button>
				<button class="vt" aria-label="Clear"><svg><use href="#s-trash"/></svg></button>
				<a href="#" class="view-name">RenderView1</a>
				<button class="btn sq" aria-label="Split horizontal"><svg viewBox="0 0 16 16"><path d="M1.500 1.500h13v13h-13zM8 1.500v13" fill="#d3d7ec" stroke="#a9aec6"/></svg></button>
				<button class="btn sq" aria-label="Split vertical"><svg viewBox="0 0 16 16"><path d="M1.500 1.500h13v13h-13zM1.500 8h13" fill="#d3d7ec" stroke="#a9aec6"/></svg></button>
				<button class="btn sq" aria-label="Maximize"><svg class="pane-icon"><use href="#pane"/></svg></button>
				<button class="btn sq" aria-label="Close view"><svg class="x"><use href="#close"/></svg></button>
			</div>
			<div class="view">
				<div class="mesh-face"></div>
				<svg class="axes" viewBox="0 0 80 70">
					<path d="M15.500 12v45" stroke="#d8d830" stroke-width="1"/>
					<path d="M15 56.500h45" stroke="#c8102e" stroke-width="1"/>
					<path d="M15.500 2l4 11h-8z" fill="#e6e620" stroke="#55551a" stroke-width=".6"/>
					<path d="M70 56.500l-11 4v-8z" fill="#e01020" stroke="#501018" stroke-width=".6"/>
					<circle cx="15" cy="56.500" r="4.500" fill="#0b6b1c"/>
					<text x="18" y="12">Y</text>
					<text x="19" y="56">Z</text>
					<text x="62" y="57">X</text>
				</svg>
				<p class="watermark"><b>知乎</b><span>@慢慢闲者</span></p>
			</div>
		</section>
	</main>

	<footer>
		<span class="hint">Toggle Color Legend Visibility</span>
		<button class="btn abort" aria-label="Abort"><svg viewBox="0 0 12 12"><path d="M3 3l6 6M9 3L3 9" stroke="#999" stroke-width="3"/></svg></button>
		<div class="progress"></div>
		<div class="memory"><div class="bar" style="width: 45%"></div><span>DESKTOP-1EMOL05: 7.2 GiB/15.9 GiB 45.2%</span></div>
	</footer>
	<div class="desktop"></div>

</body>
</html>
```
FILE: styles.css
```
* {
	margin: 0;
	padding: 0;
	box-sizing: border-box;
}

body {
	display: flex;
	flex-direction: column;
	height: 100vh;
	overflow: hidden;
	background: #efefef;
	color: #000;
	font: 12px/16px "Noto Sans", "Open Sans", sans-serif;
}

button, input, select, label, .tree {
	font: 10px/14px "Liberation Mono", monospace;
	color: #000;
}

button { border: 0; background: none; }
a { color: inherit; text-decoration: none; }
svg { display: block; flex: none; overflow: visible; }

.sprite { position: absolute; width: 0; height: 0; }

/* icon paints */
.green { fill: #a8d08d; stroke: #6c8760; stroke-width: 1; }
.blue { fill: #3a7fae; stroke: #2d6a94; stroke-width: 1; }
.bright { fill: #2f8fd0; }
.red { fill: #c9402f; stroke: #8b3a30; stroke-width: .6; }
.yellow { fill: #f5b921; stroke: #8d7024; stroke-width: .8; }
.gray { fill: #c3c5c5; stroke: #8d8f8f; stroke-width: 1; }
.gray.dark { fill: #a2a6a3; stroke: #666; }
.line { fill: none; stroke: #666; stroke-width: 1.3; }
.line.thin { stroke: #888; stroke-width: .8; }
.wire { fill: none; stroke: #999; stroke-width: 1.1; }
.wire.dark { stroke: #777; }
.pale { fill: #ddd; stroke: #999; stroke-width: 1; }
.solid { fill: #9d9d9d; }
.solid.light { fill: #bdbdbd; }
.frame { fill: #f4f4f4; stroke: #777; }
.folder { fill: #e3b94f; stroke: #98803e; stroke-width: 1; }
.folder-front { fill: #f8d775; stroke: #a88c40; stroke-width: 1; }

/* title and menu */
.titlebar {
	display: flex;
	align-items: center;
	height: 23px;
	flex: none;
	padding: 0 2px;
	background: #fff;
}
.logo { width: 16px; height: 12px; }
.title { flex: 1; margin-left: 5px; }
.win { width: 46px; height: 22px; display: grid; place-items: center; }
.win svg { width: 12px; height: 12px; fill: none; stroke: #000; }

.menubar {
	display: flex;
	align-items: center;
	height: 21px;
	flex: none;
	padding-left: 3px;
}
.menubar a { padding: 0 7px; }
.menubar u { text-underline-offset: 2px; }

/* toolbars */
.toolbar {
	display: flex;
	align-items: center;
	height: 39px;
	flex: none;
	border-top: 1px solid #c0c0c0;
	background: linear-gradient(#fbfbfb, #ededed);
}
.toolbar label { padding-top: 2px; }
.grip {
	width: 6px;
	height: 17px;
	margin: 0 4px 0 7px;
	background: radial-gradient(circle at 1px 1px, #c4c4c4 1px, transparent 1px) 0 0 / 3px 3px;
}
.grip:first-child { margin: 0 3px 0 4px; }
.sep { width: 1px; height: 18px; margin: 0 2px 0 3px; background: #d2d2d2; }
.tool {
	display: grid;
	place-items: center;
	width: 32px;
	height: 32px;
	flex: none;
	position: relative;
}
.tool svg { width: 22px; height: 22px; }
.filters { height: 38px; }
.filters .tool { width: 33px; }
.filters .grip { margin-right: 3px; }
.filters .grip:first-child { margin-right: 2px; }
.flip svg { transform: scaleX(-1); }
.pressed { background: #dcdcdc; border: 1px solid #aaa; border-radius: 2px; }
.has-menu::after {
	content: "";
	position: absolute;
	right: 2px;
	bottom: 3px;
	border: 3px solid transparent;
	border-top-color: #444;
	border-bottom: 0;
}

.tool text { font: 9px "Open Sans", sans-serif; fill: #444; }
.tool .mark { font: italic bold 13px "Open Sans", sans-serif; fill: #000; }
.tool .deg { font: bold 8px "Open Sans", sans-serif; fill: #555; }
.ask { font: 15px "Open Sans", sans-serif; fill: #555; }
.ax-x, .ax-y { --u: #a8d08d; }
.ax-x { --s: #f5b921; --o: #cf3a26; }
.ax-y { --s: #cf3a26; --o: #f5b921; }
.ax-z { --u: #f5b921; --s: #cf3a26; --o: #a8d08d; }
.u, .s, .o { stroke: #666; stroke-width: .8; }
.u { fill: var(--u); }
.s { fill: var(--s); }
.o { fill: var(--o); }

/* controls */
.combo { position: relative; display: grid; }
.combo::after {
	content: "";
	position: absolute;
	right: 7px;
	top: 9px;
	border: 4px solid transparent;
	border-top-color: #555;
	border-bottom: 0;
}
select {
	appearance: none;
	width: 100%;
	height: 22px;
	padding: 1px 4px 0;
	border: 1px solid #acacac;
	border-radius: 3px;
	background: linear-gradient(#fff, #ededed);
	opacity: 1;
}
.combo-time { width: 58px; margin: 0 3px 0 2px; }
.combo-color { width: 150px; margin-right: 4px; }
.combo-color select { height: 24px; padding-left: 24px; }
.combo-color::before {
	content: "";
	position: absolute;
	left: 8px;
	top: 6px;
	width: 12px;
	height: 12px;
	border-radius: 50%;
	background: #c5813f;
}
.combo-part { width: 72px; }
.combo-part::after { border-top-color: #aaa; }
.combo-rep { width: 150px; }

.spin { position: relative; margin-right: 2px; }
.spin input {
	appearance: textfield;
	display: block;
	width: 35px;
	height: 22px;
	padding: 1px 15px 0 4px;
	border: 1px solid #acacac;
	border-radius: 3px;
	background: linear-gradient(to right, #fff 20px, #acacac 20px 21px, #f5f5f5 21px);
}
.spin input::-webkit-inner-spin-button { display: none; }
.spin::before, .spin::after {
	content: "";
	position: absolute;
	right: 3px;
	top: 5px;
	border: 4px solid transparent;
	border-top: 0;
	border-bottom-color: #555;
}
.spin::after { top: 14px; border: 4px solid transparent; border-bottom: 0; border-top-color: #999; }

.btn {
	display: flex;
	align-items: center;
	justify-content: center;
	gap: 3px;
	height: 24px;
	border: 1px solid #b0b0b0;
	border-radius: 3px;
	background: linear-gradient(#fff, #ededed);
}
.btn:disabled { color: #777; border-color: #c4c4c4; }
.btn svg { width: 14px; height: 14px; }

input[type=checkbox] {
	appearance: none;
	flex: none;
	width: 14px;
	height: 14px;
	border: 1px solid #bdbdbd;
	background: #fff;
}
input[type=checkbox]:checked::after {
	content: "";
	display: block;
	width: 10px;
	height: 10px;
	margin: 1px;
	background: #111;
	clip-path: polygon(0 50%, 20% 40%, 40% 70%, 75% 0, 100% 0, 50% 100%, 35% 100%);
}
input.partial::after {
	content: "";
	display: block;
	width: 10px;
	height: 10px;
	margin: 1px;
	border: 1px solid #555;
	background: #8b8b8b;
}

/* body */
main {
	flex: 1;
	min-height: 0;
	display: grid;
	grid-template-columns: 426px 7px 1fr;
	border-top: 1px solid #b4b4b4;
}
aside {
	display: grid;
	grid-template-rows: 327fr 6px 514fr;
	min-height: 0;
}
.dock { display: flex; flex-direction: column; min-height: 0; }
.dock-title {
	display: flex;
	align-items: center;
	gap: 2px;
	height: 20px;
	flex: none;
	padding: 0 1px 0 4px;
}
.dock-title h2 { flex: 1; font-size: 12px; font-weight: normal; }
.mini svg, .x { width: 12px; height: 12px; }

.tree {
	flex: 1;
	list-style: none;
	border: 1px solid #b4b4b4;
	background: #fff;
	padding-top: 2px;
}
.tree li { display: flex; align-items: center; height: 22px; }
.eye { width: 14px; height: 10px; margin: 0 3px 0 4px; }
.tree a {
	display: flex;
	align-items: center;
	gap: 3px;
	height: 18px;
	padding-right: 3px;
	border: 1px solid transparent;
}
.tree .current { border-color: #b9d9e8; background: #eff8fc; }
.node { width: 16px; height: 16px; }
.splitter {
	width: 18px;
	height: 3px;
	margin: 1px auto 0;
	background: radial-gradient(circle at 1px 1px, #c4c4c4 1px, transparent 1px) 0 0 / 3px 3px;
}

.tabs { display: flex; align-items: flex-end; height: 24px; flex: none; border-bottom: 1px solid #b4b4b4; }
.tabs .tab {
	height: 20px;
	width: 90px;
	border: 1px solid #b4b4b4;
	border-left: 0;
	border-bottom: 0;
	border-radius: 0 2px 0 0;
	background: #dedede;
}
.tabs .on { width: 84px; height: 22px; margin-bottom: -1px; border-left: 1px solid #b4b4b4; background: linear-gradient(#fff, #efefef); }
.properties .dock-title { margin-bottom: 8px; height: 21px; }

.actions { display: grid; grid-template-columns: repeat(4, 1fr); gap: 2px; padding: 0 9px; }
.help { font: bold 18px/20px "Open Sans", sans-serif; color: #93b57c; }
.search { display: flex; gap: 2px; padding: 6px 9px; }
.search input {
	flex: 1;
	height: 23px;
	padding: 0 2px;
	border: 1px solid #b0b0b0;
	border-radius: 3px;
	background: #fff;
}
.search input::placeholder { color: #808080; }
.search .btn { width: 24px; }

.scroll { display: flex; flex: 1; min-height: 0; margin-bottom: 7px; padding: 0 9px; overflow: hidden; }
.panel { flex: 1; min-width: 0; overflow: hidden; }
.group { display: flex; align-items: center; gap: 4px; margin-bottom: 6px; }
.group h3 {
	flex: 1;
	display: flex;
	align-items: center;
	gap: 7px;
	height: 26px;
	padding-left: 11px;
	border: 1px solid #b4b4b4;
	background: #ebebeb;
	font: bold 12px/14px "Liberation Mono", monospace;
	white-space: nowrap;
}
.group h3 i { width: 13px; height: 4px; background: #4090b5; }
.group .btn { width: 28px; }
.group svg { width: 16px; height: 16px; }
.faint svg { opacity: .6; }
.refresh { width: 80px; height: 20px; margin-bottom: 2px; }
.check { display: flex; align-items: center; gap: 4px; height: 22px; }
.field { display: grid; grid-template-columns: 70px 1fr; align-items: center; height: 26px; }

.list {
	border: 1px solid #b4b4b4;
	background: #fff;
	margin-bottom: 4px;
}
.mesh { margin-top: 1px; padding-bottom: 16px; }
.list label {
	display: flex;
	align-items: center;
	gap: 6px;
	height: 17px;
	padding-left: 3px;
	font: 12px/16px "Noto Sans", "Open Sans", sans-serif;
}
.list-head {
	display: flex;
	align-items: center;
	justify-content: space-between;
	height: 22px;
	padding-right: 1px;
	border-bottom: 1px solid #b4b4b4;
	background: linear-gradient(#fafafa, #e6e6e6);
}
.list-head svg { width: 14px; height: 14px; }

.scrollbar { display: flex; flex-direction: column; width: 14px; border-left: 1px solid #c0c0c0; }
.scrollbar .arrow { height: 13px; display: grid; place-items: center; }
.arrow::after {
	content: "";
	border: 4px solid transparent;
	border-top-color: #555;
	border-bottom: 0;
}
.arrow.up::after { transform: rotate(180deg); }
.thumb { flex: 12; border: 1px solid #c4c4c4; border-width: 1px 0; background: linear-gradient(to right, #fff, #f2f2f2); }
.track { flex: 25; background: #e2e2e2; border-bottom: 1px solid #c4c4c4; }

.divider {
	align-self: center;
	width: 3px;
	height: 18px;
	margin-left: 2px;
	background: radial-gradient(circle at 1px 1px, #c4c4c4 1px, transparent 1px) 0 0 / 3px 3px;
}

/* render view */
.layout { display: flex; flex-direction: column; min-width: 0; min-height: 0; }
.layout-tabs { display: flex; align-items: flex-end; height: 28px; flex: none; border-bottom: 1px solid #b4b4b4; }
.layout-tabs .tab {
	display: flex;
	align-items: center;
	justify-content: center;
	gap: 3px;
	width: 28px;
	height: 23px;
	border: 1px solid #b4b4b4;
	border-left: 0;
	border-bottom: 0;
	background: #e8e8e8;
}
.layout-tabs .on { width: 112px; height: 26px; margin-bottom: -1px; border-left: 1px solid #b4b4b4; border-radius: 3px 3px 0 0; background: #fff; }
.pane-icon { width: 16px; height: 16px; }

.viewbar { display: flex; align-items: center; height: 27px; flex: none; padding: 0 3px 0 1px; }
.vt { display: grid; place-items: center; width: 26px; height: 26px; flex: none; }
.vt svg { width: 18px; height: 18px; }
.three { font: bold 11px "Open Sans", sans-serif; color: #555; }
.view-name { margin: 0 10px 0 auto; font: bold 12px/14px "Liberation Mono", monospace; text-decoration: underline; }
.sq { width: 25px; height: 25px; margin-left: 2px; }
.sq svg { width: 16px; height: 16px; }
.sq .pane-icon { width: 18px; height: 18px; }
.sq .x { width: 12px; height: 12px; }

.view {
	position: relative;
	flex: 1;
	display: grid;
	place-items: center;
	min-height: 0;
	margin: 0 2px 0 1px;
	border: 2px solid #0b00a8;
	outline: 1px solid #d9d9f2;
	outline-offset: -3px;
	background: #52576e;
}
.mesh-face { height: 69%; aspect-ratio: 1; border-radius: 1px; background: #c7c5be; }
.axes { position: absolute; left: 84px; bottom: 86px; width: 80px; height: 70px; }
.axes text { font: 15px "Open Sans", sans-serif; fill: #fff; }
.watermark {
	position: absolute;
	right: 47px;
	bottom: 13px;
	display: flex;
	gap: 22px;
	color: #fff;
	font: 55px/72px "Noto Sans CJK SC", sans-serif;
	text-shadow: 3px 3px 2px #33374a;
}
.watermark b { font-size: 58px; font-weight: 500; }

/* status bar */
footer {
	display: flex;
	align-items: center;
	height: 32px;
	flex: none;
	padding: 2px 1px 0 6px;
}
.hint { flex: 1; }
.abort { width: 20px; height: 19px; margin-right: 2px; }
.progress {
	width: 32%;
	height: 25px;
	margin-right: 7px;
	border: 1px solid #fff;
	border-top-color: #a0a0a0;
	border-left-color: #a0a0a0;
}
.memory {
	position: relative;
	display: grid;
	width: 637px;
	height: 25px;
	border: 1px solid #a6b0a0;
	border-radius: 3px;
	background: #fff;
}
.bar { background: linear-gradient(#dcf8d6, #b3dfae); border-right: 1px solid #8fa98a; }
.memory span { position: absolute; left: 0; right: 0; top: 4px; text-align: center; }
.desktop { height: 2px; flex: none; background: #d6dfc6; }
```
